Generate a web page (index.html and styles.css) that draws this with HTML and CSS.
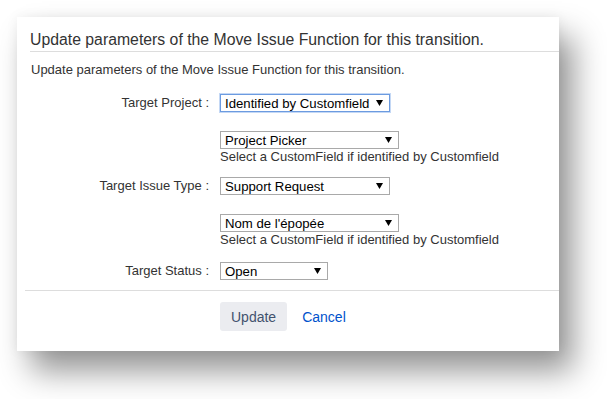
FILE: index.html
```html
<!DOCTYPE html>
<html lang="en">
  <head>
    <meta charset="UTF-8" />
    <title>Update parameters</title>
    <link rel="stylesheet" href="styles.css">
  </head>
  <body>
    <div class="dialog">
      <h2 class="dialog-title">Update parameters of the Move Issue Function for this transition.</h2>
      <p class="intro">Update parameters of the Move Issue Function for this transition.</p>
      <form class="form">
        <div class="row row-first">
          <label class="label">Target Project :</label>
          <div class="field">
            <div class="select select-focus select-md">
              <span>Identified by Customfield</span>
              <svg class="arrow" width="7" height="6" viewBox="0 0 7 6"><path d="M0 0H7L3.5 6Z" fill="#000"/></svg>
            </div>
          </div>
        </div>
        <div class="row row-sub">
          <div class="label"></div>
          <div class="field">
            <div class="select select-lg">
              <span>Project Picker</span>
              <svg class="arrow" width="7" height="6" viewBox="0 0 7 6"><path d="M0 0H7L3.5 6Z" fill="#000"/></svg>
            </div>
            <div class="help">Select a CustomField if identified by Customfield</div>
          </div>
        </div>
        <div class="row row-next">
          <label class="label">Target Issue Type :</label>
          <div class="field">
            <div class="select select-md">
              <span>Support Request</span>
              <svg class="arrow" width="7" height="6" viewBox="0 0 7 6"><path d="M0 0H7L3.5 6Z" fill="#000"/></svg>
            </div>
          </div>
        </div>
        <div class="row row-sub">
          <div class="label"></div>
          <div class="field">
            <div class="select select-lg">
              <span>Nom de l'épopée</span>
              <svg class="arrow" width="7" height="6" viewBox="0 0 7 6"><path d="M0 0H7L3.5 6Z" fill="#000"/></svg>
            </div>
            <div class="help">Select a CustomField if identified by Customfield</div>
          </div>
        </div>
        <div class="row row-last">
          <label class="label">Target Status :</label>
          <div class="field">
            <div class="select select-sm">
              <span>Open</span>
              <svg class="arrow" width="7" height="6" viewBox="0 0 7 6"><path d="M0 0H7L3.5 6Z" fill="#000"/></svg>
            </div>
          </div>
        </div>
        <div class="buttons">
          <button type="button" class="btn">Update</button>
          <a href="#" class="cancel">Cancel</a>
        </div>
      </form>
    </div>
  </body>
</html>
```

FILE: styles.css
```css
body {
  font-family: "Liberation Sans", Arial, sans-serif;
  background-color: #fff;
  margin: 0;
  padding: 17px 17px 48px;
}

.dialog {
  width: 542px;
  height: 334px;
  background-color: #fff;
  box-shadow: 14px 20px 30px rgba(0, 0, 0, 0.42), 0 0 12px rgba(0, 0, 0, 0.06);
  display: flex;
  flex-direction: column;
}

.dialog-title {
  margin: 0 0 0 13px;
  padding: 13px 0 0;
  height: 21px;
  font-size: 15.8px;
  font-weight: normal;
  line-height: 20px;
  color: #333;
  border-bottom: 1px solid #ddd;
}

.intro {
  margin: 10px 0 0 14px;
  font-size: 13px;
  line-height: 16px;
  color: #333;
}

.form {
  display: flex;
  flex-direction: column;
  flex: 1;
}

.row {
  display: grid;
  grid-template-columns: 192px auto;
  column-gap: 11px;
  align-items: start;
}

.row-first {
  margin-top: 16px;
}

.row-sub {
  margin-top: 19px;
}

.row-next {
  margin-top: 12px;
}

.row-last {
  margin-top: 14px;
}

.label {
  text-align: right;
  font-size: 13px;
  line-height: 18px;
  color: #333;
}

.field {
  display: flex;
  flex-direction: column;
  align-items: flex-start;
}

.select {
  box-sizing: border-box;
  height: 18px;
  border: 1px solid #a9a9a9;
  display: flex;
  align-items: center;
  justify-content: space-between;
  padding: 0 6px 0 4px;
  font-size: 13.2px;
  color: #000;
  background: #fff;
}

.select-focus {
  border-color: #6c9be0;
  box-shadow: 0 0 0 1px #c4d8f5;
}

.select-md {
  width: 170px;
}

.select-lg {
  width: 179px;
}

.select-sm {
  width: 108px;
}

.arrow {
  flex: none;
}

.help {
  font-size: 13px;
  line-height: 16px;
  color: #333;
}

.buttons {
  border-top: 1px solid #ddd;
  margin: 10px 0 0 8px;
  padding: 11px 0 0 195px;
  display: flex;
  align-items: center;
  gap: 15px;
}

.btn {
  height: 29px;
  padding: 0 11px;
  border: none;
  border-radius: 3px;
  background-color: #ebecf0;
  color: #42526e;
  font-family: inherit;
  font-size: 14px;
}

.cancel {
  color: #0052cc;
  text-decoration: none;
  font-size: 14px;
}
```
